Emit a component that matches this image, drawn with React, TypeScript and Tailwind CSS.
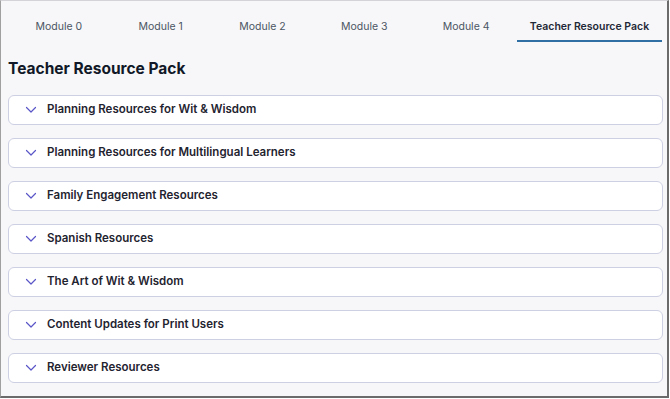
import React from "react";

const tabs = ["Module 0", "Module 1", "Module 2", "Module 3", "Module 4", "Teacher Resource Pack"];

const sections = [
  "Planning Resources for Wit & Wisdom",
  "Planning Resources for Multilingual Learners",
  "Family Engagement Resources",
  "Spanish Resources",
  "The Art of Wit & Wisdom",
  "Content Updates for Print Users",
  "Reviewer Resources",
];

function Chevron() {
  return (
    <svg width="12" height="8" viewBox="0 0 12 8" fill="none" className="shrink-0">
      <path d="M1.5 1.5 L6 6 L10.5 1.5" stroke="#5a56c8" strokeWidth="1.2" strokeLinecap="round" strokeLinejoin="round" />
    </svg>
  );
}

export default function App() {
  const active = tabs.length - 1;
  return (
    <div
      className="w-[669px] h-[398px] bg-[#f7f7f9] border-l border-t border-l-[#a0a0a0] border-t-[#d4d4d8] border-r-2 border-b-2 border-r-[#6b6b6b] border-b-[#6b6b6b] overflow-hidden"
      style={{ fontFamily: "Inter, 'Noto Sans', sans-serif" }}
    >
      <div className="flex pl-[7px] pr-[5px] pt-[16px]">
        {tabs.map((t, i) => (
          <div
            key={t}
            className={`${i === active ? "flex-1 font-semibold text-[#1f2937] border-b-2 border-[#2f6fa3]" : "w-[101.8px] text-[#4b5563] border-b-2 border-transparent"} h-[25px] pt-[2px] flex items-start justify-center text-[10.5px] leading-[16px]`}
          >
            {t}
          </div>
        ))}
      </div>
      <div className="px-[7px] pt-[16px]">
        <h1 className="text-[15.5px] font-bold text-[#111827] leading-[22px] mb-[15px]">Teacher Resource Pack</h1>
        <div className="flex flex-col gap-[13px] w-[655px]">
          {sections.map((s) => (
            <div
              key={s}
              className="h-[30px] bg-white border border-[#cdd0e3] rounded-[6px] flex items-center gap-[10px] pl-[16px]"
            >
              <Chevron />
              <span className="text-[11.5px] font-semibold text-[#1f2430]">{s}</span>
            </div>
          ))}
        </div>
      </div>
    </div>
  );
}
